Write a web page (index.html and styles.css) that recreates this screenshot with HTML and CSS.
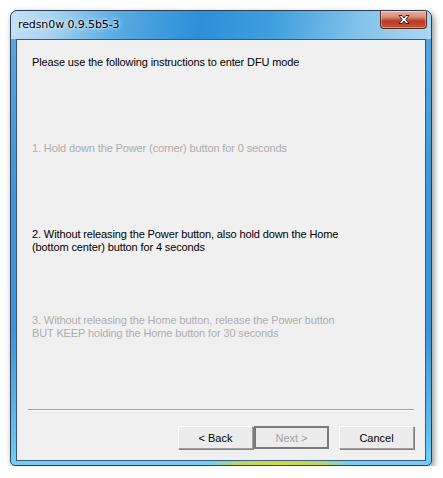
FILE: index.html
```html
<!DOCTYPE html>
<html>
<head>
<meta charset="utf-8">
<link rel="stylesheet" href="styles.css">
</head>
<body>
<div class="window">
  <div class="titlebar">
    <span class="title">redsn0w 0.9.5b5-3</span>
    <div class="close">
      <svg width="16" height="11" viewBox="0 0 16 11">
        <path d="M3 1.5 L6 1.5 L8 4 L10 1.5 L13 1.5 L9.8 5.5 L13 9.5 L10 9.5 L8 7 L6 9.5 L3 9.5 L6.2 5.5 Z" fill="#fff" stroke="#3a1b14" stroke-width="1" stroke-linejoin="round"/>
      </svg>
    </div>
  </div>
  <div class="client">
    <div class="content">
      <p class="line">Please use the following instructions to enter DFU mode</p>
      <p class="line disabled">1. Hold down the Power (corner) button for 0 seconds</p>
      <p class="line">2. Without releasing the Power button, also hold down the Home<br>(bottom center) button for 4 seconds</p>
      <p class="line disabled">3. Without releasing the Home button, release the Power button<br>BUT KEEP holding the Home button for 30 seconds</p>
    </div>
    <div class="separator"></div>
    <div class="buttons">
      <button class="btn">&lt; Back</button>
      <button class="btn default" disabled>Next &gt;</button>
      <button class="btn cancel">Cancel</button>
    </div>
  </div>
</div>
</body>
</html>
```

FILE: styles.css
```css
html, body {
  margin: 0;
  padding: 0;
  background: #ffffff;
}
body {
  padding: 10px 0 0 10px;
  font-family: "Liberation Sans", Arial, sans-serif;
  font-size: 11px;
}
.window {
  box-sizing: border-box;
  width: 422px;
  height: 456px;
  border: 1px solid #2c3e52;
  border-radius: 7px 7px 5px 5px;
  display: flex;
  flex-direction: column;
  background:
    radial-gradient(ellipse 75px 9px at 64% 100%, rgba(216,222,60,1) 0%, rgba(200,218,70,0.9) 50%, rgba(108,205,243,0) 100%),
    linear-gradient(180deg, #5aa8e0 0%, #3f96d8 40%, #3b95da 70%, #5fbdec 92%, #74cff5 100%);
  box-shadow: 2px 3px 6px rgba(0,0,0,0.45);
  overflow: hidden;
}
.titlebar {
  height: 28px;
  display: flex;
  align-items: flex-start;
  padding-left: 7px;
  background: linear-gradient(100deg, #c3e2f6 0%, #a8d3f0 10%, #56aae2 26%, #2c8fd8 45%, #3f9fdd 62%, #80c2ea 82%, #abd7f2 100%);
}
.title {
  font-family: "DejaVu Sans", sans-serif;
  font-size: 11px;
  line-height: 28px;
  color: #000;
  text-shadow: 0 0 6px rgba(255,255,255,0.9), 0 0 3px rgba(255,255,255,0.9);
  letter-spacing: -0.1px;
}
.close {
  margin-left: auto;
  margin-right: 4px;
  width: 47px;
  height: 18px;
  box-sizing: border-box;
  border: 1px solid #5b2a1f;
  border-top: none;
  border-radius: 0 0 4px 4px;
  background: linear-gradient(180deg, #e9b2a5 0%, #d98a76 35%, #c85a42 50%, #b63a24 60%, #c9533a 100%);
  display: flex;
  align-items: center;
  justify-content: center;
  box-shadow: inset 0 0 0 1px rgba(255,255,255,0.35);
}
.close svg { display: block; }
.client {
  margin: 0 5px 4px 5px;
  flex: 1;
  box-sizing: border-box;
  border: 1px solid #3a5878;
  background: #f0f0f0;
  display: flex;
  flex-direction: column;
}
.content {
  flex: 1;
  padding: 16px 0 0 15px;
  display: grid;
  grid-auto-rows: 86px;
  align-content: start;
}
.line {
  margin: 0;
  line-height: 13px;
  color: #000;
  letter-spacing: -0.12px;
}
.disabled {
  color: #adadad;
}
.separator {
  margin: 0 11px;
  height: 0;
  border-top: 1px solid #a0a0a0;
  border-bottom: 1px solid #ffffff;
}
.buttons {
  display: flex;
  justify-content: flex-end;
  padding: 15px 11px 11px 0;
}
.btn {
  box-sizing: border-box;
  width: 75px;
  height: 23px;
  margin: 0;
  padding: 0;
  font-family: "Liberation Sans", Arial, sans-serif;
  font-size: 11px;
  color: #000;
  background: #ececec;
  border: 1px solid;
  border-color: #ffffff #a0a0a0 #a0a0a0 #ffffff;
  box-shadow: 1px 1px 0 #808080;
}
.default {
  color: #a0a0a0;
  border: 2px solid #7a7a7a;
  box-shadow: none;
  margin-left: 1px;
}
.cancel {
  margin-left: 10px;
}
```
